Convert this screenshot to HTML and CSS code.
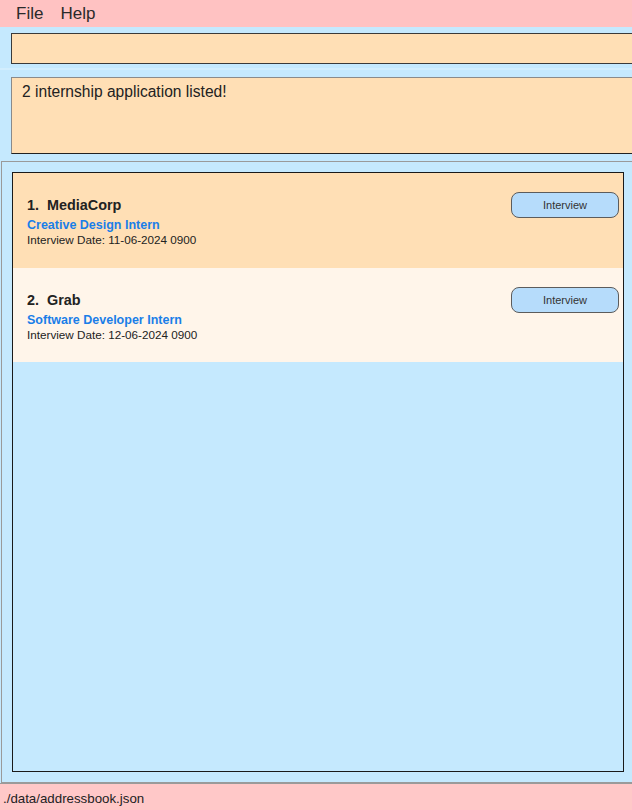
FILE: index.html
```html
<!DOCTYPE html>
<html>
<head>
<meta charset="utf-8">
<link rel="stylesheet" href="styles.css">
</head>
<body>
<div class="app">
  <div class="menubar">
    <span class="menu-item">File</span>
    <span class="menu-item">Help</span>
  </div>
  <div class="command-area">
    <div class="command-box"></div>
  </div>
  <div class="split-line"></div>
  <div class="result-area">
    <div class="result-box">2 internship application listed!</div>
  </div>
  <div class="list-panel">
    <div class="list">
      <div class="card card-odd">
        <div class="card-info">
          <div class="card-title"><span class="idx">1.</span>MediaCorp</div>
          <div class="card-role">Creative Design Intern</div>
          <div class="card-date">Interview Date: 11-06-2024 0900</div>
        </div>
        <div class="status-btn">Interview</div>
      </div>
      <div class="card card-even">
        <div class="card-info">
          <div class="card-title"><span class="idx">2.</span>Grab</div>
          <div class="card-role">Software Developer Intern</div>
          <div class="card-date">Interview Date: 12-06-2024 0900</div>
        </div>
        <div class="status-btn">Interview</div>
      </div>
    </div>
  </div>
  <div class="statusbar">./data/addressbook.json</div>
</div>
</body>
</html>
```
FILE: styles.css
```css
* { box-sizing: border-box; }
html, body {
  margin: 0;
  padding: 0;
  width: 632px;
  height: 810px;
  overflow: hidden;
  background: #c5e9fe;
  font-family: "Liberation Sans", Arial, sans-serif;
  color: #222;
}
.app {
  width: 632px;
  height: 810px;
  display: flex;
  flex-direction: column;
}
.menubar {
  height: 27px;
  background: #ffc2c2;
  display: flex;
  align-items: center;
  padding: 1px 0 0 16px;
  gap: 17px;
  font-size: 17px;
  color: #2a2a2a;
  flex: none;
}
.command-area {
  padding: 6px 0 0 11px;
  height: 40px;
  flex: none;
}
.command-box {
  width: 640px;
  height: 31px;
  background: #ffdfb5;
  border: 1.5px solid #3a3a3a;
}
.split-line {
  height: 2px;
  margin-top: 1px;
  background: #d2eefe;
  flex: none;
}
.result-area {
  padding: 7px 0 0 11px;
  height: 91px;
  flex: none;
}
.result-box {
  width: 640px;
  height: 77px;
  background: #ffdfb5;
  border: 1px solid #222;
  border-top-color: #8a8a8a;
  border-left-color: #8a8a8a;
  padding: 5px 10px;
  font-size: 15.6px;
  color: #222;
}
.list-panel {
  flex: none;
  height: 622px;
  margin-left: 1px;
  width: 640px;
  border: 1px solid #9a9a9a;
  border-right: none;
  padding: 10px 0 10px 10px;
}
.list {
  width: 612px;
  height: 100%;
  border: 1px solid #1a1a1a;
  background: #c5e9fe;
}
.card {
  height: 94.5px;
  display: flex;
  justify-content: space-between;
  align-items: flex-start;
  padding: 19px 4px 0 14px;
}
.card-odd { background: #ffdfb5; }
.card-even { background: #fff5ea; }
.card-info {
  padding-top: 5px;
}
.card-title {
  font-size: 14.4px;
  font-weight: bold;
  color: #222;
  line-height: 17px;
}
.idx { margin-right: 8px; }
.card-role {
  font-size: 12.5px;
  font-weight: bold;
  color: #1a7ee8;
  line-height: 15px;
  margin-top: 4px;
}
.card-date {
  font-size: 11.7px;
  color: #222;
  line-height: 14px;
}
.status-btn {
  width: 108px;
  height: 26px;
  border: 1px solid #5c5c5c;
  border-radius: 8px;
  background: #b6dcfb;
  font-size: 11px;
  color: #333;
  display: flex;
  align-items: center;
  justify-content: center;
}
.statusbar {
  flex: 1;
  background: #ffc8c8;
  font-size: 13.3px;
  color: #222;
  padding: 7px 0 0 3px;
  border-top: 1px solid #9a9a9a;
}
```
